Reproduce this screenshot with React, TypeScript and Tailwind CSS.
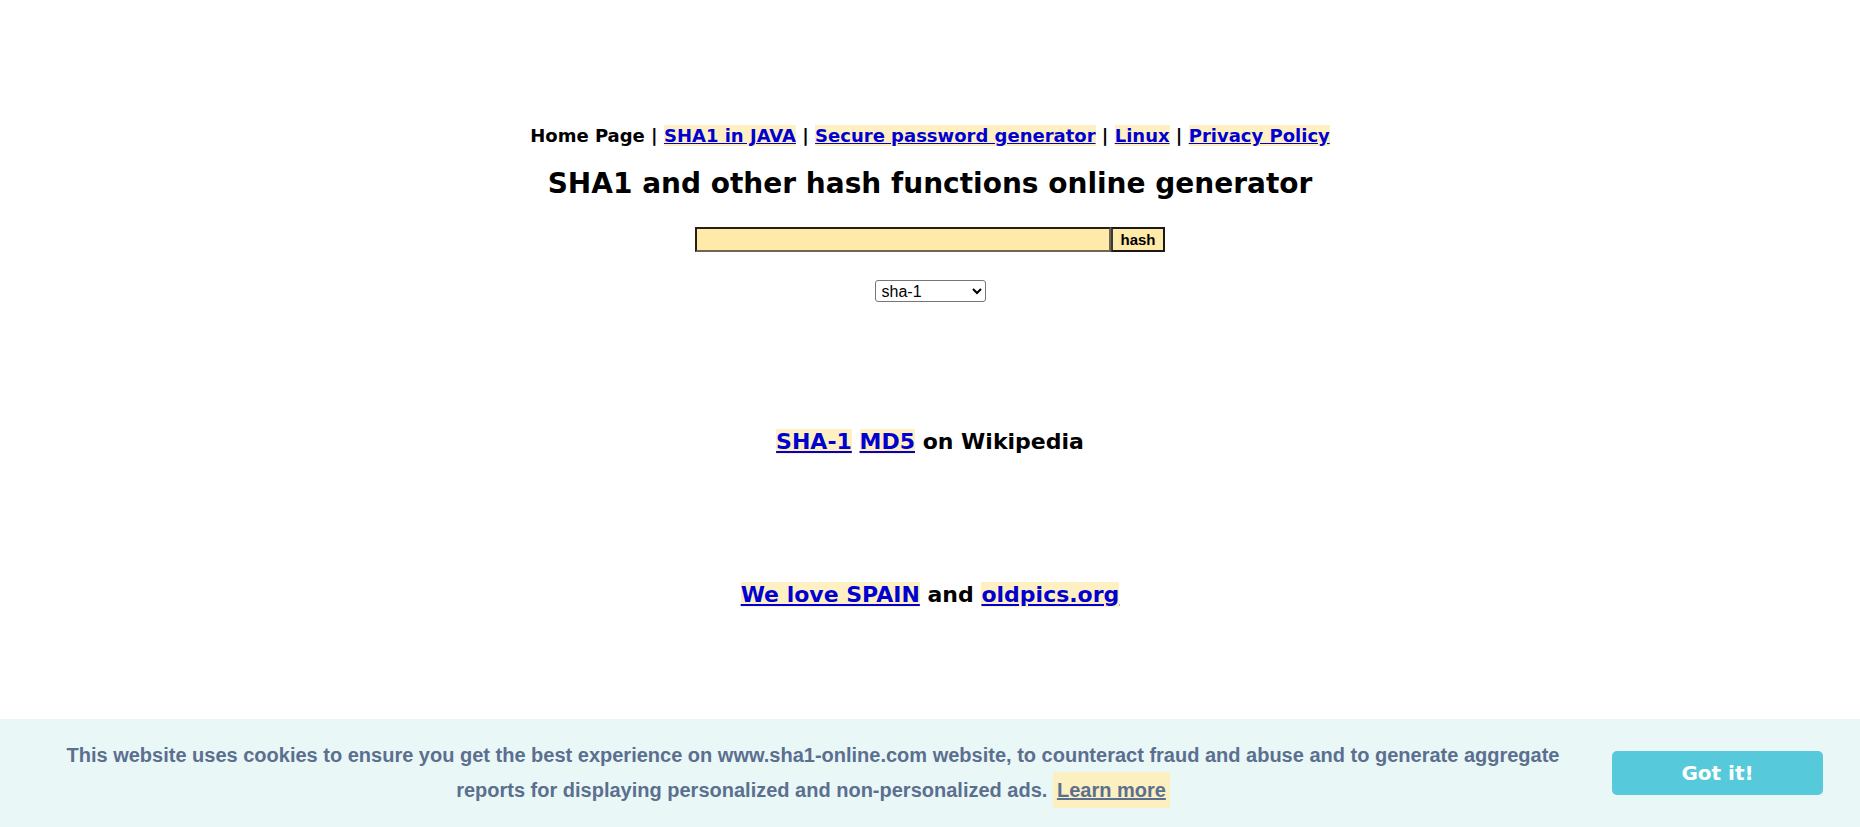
const NAV = ["SHA1 in JAVA", "Secure password generator", "Linux", "Privacy Policy"];

function Hl({ children }: { children: React.ReactNode }) {
  return (
    <a href="#" className="bg-[#fff0c4] text-[#0000d0] underline">
      {children}
    </a>
  );
}

export default function App() {
  return (
    <div className="min-h-[827px] bg-white font-['DejaVu_Sans',Verdana,sans-serif] text-black">
      <div className="flex flex-col items-center pt-[124px]">
        <p className="text-[18px] leading-[24px] font-bold">
          Home Page
          {NAV.map((n) => (
            <span key={n}>
              {" | "}
              <Hl>{n}</Hl>
            </span>
          ))}
        </p>

        <h1 className="mt-[20px] text-[28px] leading-[32px] font-bold">
          SHA1 and other hash functions online generator
        </h1>

        <form className="mt-[27px] flex" onSubmit={(e) => e.preventDefault()}>
          <input
            type="text"
            className="h-[25px] w-[416px] border-2 border-[#2a2010] border-r-[#6f6552] border-b-[#6f6552] bg-[#ffeaa9] px-1 outline-none"
          />
          <button
            type="submit"
            className="h-[25px] w-[54px] border-2 border-[#1a1a1a] border-l-[#3a3a3a] bg-[#ffeaa9] font-['Liberation_Sans',Arial,sans-serif] text-[15px] font-bold leading-none"
          >
            hash
          </button>
        </form>

        <select className="mt-[28px] h-[22px] w-[111px] rounded-[3px] border border-[#767676] bg-white pl-[2px] font-['Liberation_Sans',Arial,sans-serif] text-[16px] leading-none">
          <option>sha-1</option>
          <option>md5</option>
          <option>sha-256</option>
          <option>sha-512</option>
        </select>

        <p className="mt-[126px] text-[22px] leading-[28px] font-bold">
          <Hl>SHA-1</Hl> <Hl>MD5</Hl> on Wikipedia
        </p>

        <p className="mt-[125px] text-[22px] leading-[28px] font-bold">
          <Hl>We love SPAIN</Hl> and <Hl>oldpics.org</Hl>
        </p>
      </div>

      <div className="fixed bottom-0 left-0 right-0 flex h-[108px] items-center bg-[#eaf7f7] pl-[64px] pr-[37px]">
        <p className="flex-1 text-center font-['Liberation_Sans',Arial,sans-serif] text-[20px] leading-[35px] font-bold text-[#5b6f8f]">
          This website uses cookies to ensure you get the best experience on www.sha1-online.com website, to counteract
          fraud and abuse and to generate aggregate reports for displaying personalized and non-personalized ads.{" "}
          <a href="#" className="bg-[#fcefc0] px-[4px] py-[7px] underline">
            Learn more
          </a>
        </p>
        <button className="ml-[50px] h-[44px] w-[211px] rounded-[5px] bg-[#56cadb] text-[20px] font-bold text-white">
          Got it!
        </button>
      </div>
    </div>
  );
}
